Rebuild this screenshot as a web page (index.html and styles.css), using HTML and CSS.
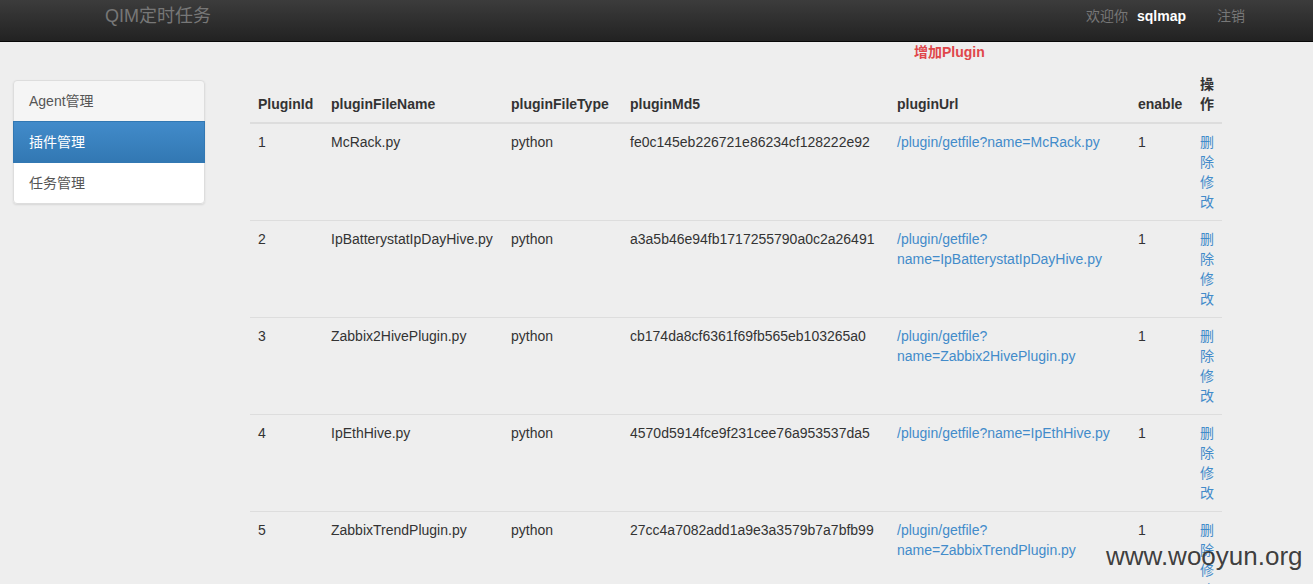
FILE: index.html
```html
<!DOCTYPE html>
<html lang="zh">
<head>
<meta charset="utf-8">
<title>QIM定时任务</title>
<link rel="stylesheet" href="styles.css">
</head>
<body>
<nav class="navbar">
  <a class="brand" href="#">QIM定时任务</a>
  <div class="nav-right">
    <span class="welcome">欢迎你</span>
    <span class="user">sqlmap</span>
    <a class="logout" href="#">注销</a>
  </div>
</nav>
<div class="page">
  <aside class="sidebar">
    <div class="list-group">
      <a class="list-item first" href="#">Agent管理</a>
      <a class="list-item active" href="#">插件管理</a>
      <a class="list-item last" href="#">任务管理</a>
    </div>
  </aside>
  <main class="content">
    <div class="toolbar"><a class="add-link" href="#">增加Plugin</a></div>
    <table class="grid">
      <colgroup>
        <col class="c-id"><col class="c-name"><col class="c-type"><col class="c-md5"><col class="c-url"><col class="c-enable"><col class="c-op">
      </colgroup>
      <thead>
        <tr><th>PluginId</th><th>pluginFileName</th><th>pluginFileType</th><th>pluginMd5</th><th>pluginUrl</th><th>enable</th><th>操作</th></tr>
      </thead>
      <tbody>
        <tr><td>1</td><td>McRack.py</td><td>python</td><td>fe0c145eb226721e86234cf128222e92</td><td><a href="#">/plugin/getfile?<wbr>name=McRack.py</a></td><td>1</td><td><a href="#">删除</a><a href="#">修改</a></td></tr>
        <tr><td>2</td><td>IpBatterystatIpDayHive.py</td><td>python</td><td>a3a5b46e94fb1717255790a0c2a26491</td><td><a href="#">/plugin/getfile?<wbr>name=IpBatterystatIpDayHive.py</a></td><td>1</td><td><a href="#">删除</a><a href="#">修改</a></td></tr>
        <tr><td>3</td><td>Zabbix2HivePlugin.py</td><td>python</td><td>cb174da8cf6361f69fb565eb103265a0</td><td><a href="#">/plugin/getfile?<wbr>name=Zabbix2HivePlugin.py</a></td><td>1</td><td><a href="#">删除</a><a href="#">修改</a></td></tr>
        <tr><td>4</td><td>IpEthHive.py</td><td>python</td><td>4570d5914fce9f231cee76a953537da5</td><td><a href="#">/plugin/getfile?<wbr>name=IpEthHive.py</a></td><td>1</td><td><a href="#">删除</a><a href="#">修改</a></td></tr>
        <tr><td>5</td><td>ZabbixTrendPlugin.py</td><td>python</td><td>27cc4a7082add1a9e3a3579b7a7bfb99</td><td><a href="#">/plugin/getfile?<wbr>name=ZabbixTrendPlugin.py</a></td><td>1</td><td><a href="#">删除</a><a href="#">修改</a></td></tr>
      </tbody>
    </table>
  </main>
</div>
<div class="watermark">www.wooyun.org</div>
</body>
</html>
```
FILE: styles.css
```css
* { box-sizing: border-box; }
html, body { margin: 0; padding: 0; }
body {
  background: #eeeeee;
  color: #333333;
  font-family: "Liberation Sans", Arial, "Noto Sans CJK SC", sans-serif;
  font-size: 14px;
  line-height: 20px;
  overflow: hidden;
}
a { text-decoration: none; color: #428bca; }

.navbar {
  height: 42px;
  background: linear-gradient(to bottom, #3c3c3c 0%, #222222 100%);
  border-bottom: 1px solid #080808;
  display: flex;
  align-items: flex-start;
  justify-content: space-between;
  padding: 5px 0 0 105px;
}
.brand {
  color: #777777;
  font-size: 18px;
  line-height: 22px;
}
.nav-right {
  display: flex;
  align-items: center;
  height: 22px;
  padding-right: 68px;
  font-size: 14px;
}
.welcome { color: #777777; }
.user { color: #ffffff; font-weight: bold; margin-left: 9px; }
.logout { color: #777777; margin-left: 31px; }

.page {
  display: flex;
  align-items: flex-start;
}
.sidebar {
  padding: 38px 0 0 13px;
  width: 205px;
  flex: none;
}
.list-group {
  border-radius: 4px;
  box-shadow: 0 1px 2px rgba(0,0,0,.1);
}
.list-item {
  display: block;
  padding: 10px 15px;
  border: 1px solid #dddddd;
  margin-bottom: -1px;
  background: #ffffff;
  color: #555555;
  line-height: 20px;
  position: relative;
}
.list-item.first { background: #f5f5f5; border-radius: 4px 4px 0 0; }
.list-item.last { border-radius: 0 0 4px 4px; margin-bottom: 0; }
.list-item.active {
  background: linear-gradient(to bottom, #428bca 0%, #3278b3 100%);
  border-color: #3278b3;
  color: #ffffff;
  z-index: 2;
}

.content {
  margin-left: 45px;
  flex: none;
}
.toolbar {
  padding-left: 664px;
  height: 20px;
  margin-bottom: 4px;
}
.add-link {
  color: #e0464a;
  font-weight: bold;
}

.grid {
  border-collapse: collapse;
  table-layout: fixed;
  width: 972px;
}
.c-id { width: 73px; }
.c-name { width: 180px; }
.c-type { width: 119px; }
.c-md5 { width: 267px; }
.c-url { width: 241px; }
.c-enable { width: 62px; }
.c-op { width: 30px; }
.grid th, .grid td {
  padding: 8px;
  text-align: left;
  line-height: 20px;
}
.grid th {
  vertical-align: bottom;
  font-weight: bold;
  border-bottom: 2px solid #dddddd;
}
.grid td {
  vertical-align: top;
  border-top: 1px solid #dddddd;
  white-space: normal;
}
.watermark {
  position: absolute;
  left: 1106px;
  top: 541px;
  font-family: "Liberation Sans", Arial, sans-serif;
  font-size: 26px;
  line-height: 30px;
  color: rgba(40,40,40,.9);
}
```
